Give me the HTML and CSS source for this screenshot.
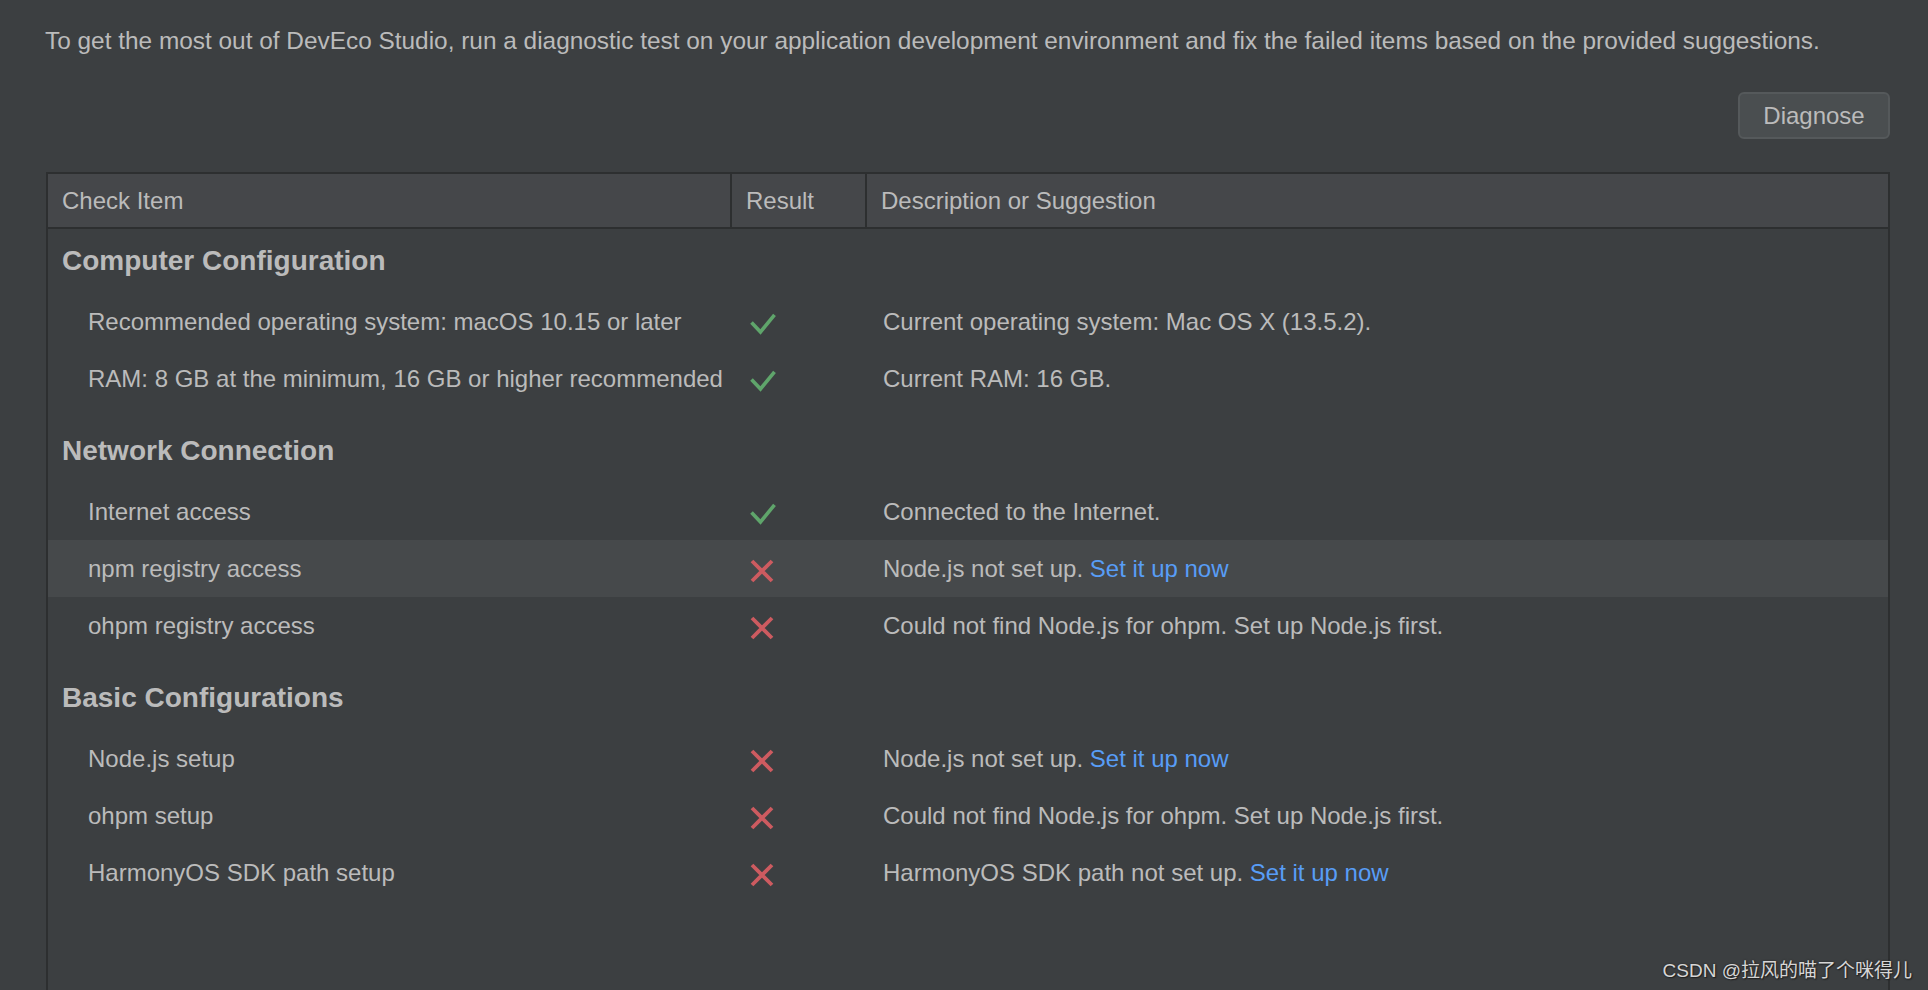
FILE: index.html
```html
<!DOCTYPE html>
<html lang="en">
<head>
<meta charset="utf-8">
<title>DevEco Studio Diagnose</title>
<link rel="stylesheet" href="styles.css">
</head>
<body>
<div class="page">
  <p class="intro">To get the most out of DevEco Studio, run a diagnostic test on your application development environment and fix the failed items based on the provided suggestions.</p>
  <div class="actions"><button class="btn">Diagnose</button></div>
  <div class="table">
    <div class="thead">
      <div class="th">Check Item</div>
      <div class="th">Result</div>
      <div class="th">Description or Suggestion</div>
    </div>
    <div class="tbody">
      <div class="section first">Computer Configuration</div>
      <div class="row">
        <div class="item">Recommended operating system: macOS 10.15 or later</div>
        <div class="result"><svg class="icon ok" viewBox="0 0 26 22" width="26" height="22"><polyline points="1.5,9.5 10.5,19 24.5,1.8"/></svg></div>
        <div class="desc">Current operating system: Mac OS X (13.5.2).</div>
      </div>
      <div class="row">
        <div class="item">RAM: 8 GB at the minimum, 16 GB or higher recommended</div>
        <div class="result"><svg class="icon ok" viewBox="0 0 26 22" width="26" height="22"><polyline points="1.5,9.5 10.5,19 24.5,1.8"/></svg></div>
        <div class="desc">Current RAM: 16 GB.</div>
      </div>

      <div class="section">Network Connection</div>
      <div class="row">
        <div class="item">Internet access</div>
        <div class="result"><svg class="icon ok" viewBox="0 0 26 22" width="26" height="22"><polyline points="1.5,9.5 10.5,19 24.5,1.8"/></svg></div>
        <div class="desc">Connected to the Internet.</div>
      </div>
      <div class="row selected">
        <div class="item">npm registry access</div>
        <div class="result"><svg class="icon fail" viewBox="0 0 24 24" width="24" height="24"><path d="M2 2 L22 22 M22 2 L2 22"/></svg></div>
        <div class="desc">Node.js not set up. <a class="link" href="#">Set it up now</a></div>
      </div>
      <div class="row">
        <div class="item">ohpm registry access</div>
        <div class="result"><svg class="icon fail" viewBox="0 0 24 24" width="24" height="24"><path d="M2 2 L22 22 M22 2 L2 22"/></svg></div>
        <div class="desc">Could not find Node.js for ohpm. Set up Node.js first.</div>
      </div>

      <div class="section">Basic Configurations</div>
      <div class="row">
        <div class="item">Node.js setup</div>
        <div class="result"><svg class="icon fail" viewBox="0 0 24 24" width="24" height="24"><path d="M2 2 L22 22 M22 2 L2 22"/></svg></div>
        <div class="desc">Node.js not set up. <a class="link" href="#">Set it up now</a></div>
      </div>
      <div class="row">
        <div class="item">ohpm setup</div>
        <div class="result"><svg class="icon fail" viewBox="0 0 24 24" width="24" height="24"><path d="M2 2 L22 22 M22 2 L2 22"/></svg></div>
        <div class="desc">Could not find Node.js for ohpm. Set up Node.js first.</div>
      </div>
      <div class="row">
        <div class="item">HarmonyOS SDK path setup</div>
        <div class="result"><svg class="icon fail" viewBox="0 0 24 24" width="24" height="24"><path d="M2 2 L22 22 M22 2 L2 22"/></svg></div>
        <div class="desc">HarmonyOS SDK path not set up. <a class="link" href="#">Set it up now</a></div>
      </div>
    </div>
  </div>
  <div class="watermark">CSDN @拉风的喵了个咪得儿</div>
</div>
</body>
</html>
```
FILE: styles.css
```css
html, body {
  margin: 0;
  padding: 0;
  background: #3c3f41;
}

body {
  font-family: "Liberation Sans", Arial, "Noto Sans CJK SC", sans-serif;
  font-size: 24px;
  color: #bbbbbb;
}

.page {
  position: relative;
  height: 990px;
  box-sizing: border-box;
  padding: 26px 38px 0 46px;
  display: flex;
  flex-direction: column;
  overflow: hidden;
}

.intro {
  margin: 0 0 0 -1px;
  line-height: 30px;
  font-size: 24.4px;
  white-space: nowrap;
}

.actions {
  display: flex;
  justify-content: flex-end;
  margin-top: 36px;
}

.btn {
  height: 47px;
  width: 152px;
  box-sizing: border-box;
  border: 2px solid #55595b;
  border-radius: 6px;
  background: #4a4e50;
  color: #bbbbbb;
  font-family: inherit;
  font-size: 24px;
  padding: 0;
}

.table {
  flex: 1;
  margin-top: 33px;
  border: 2px solid #2d2f30;
  border-bottom: none;
  display: flex;
  flex-direction: column;
}

.thead {
  display: grid;
  grid-template-columns: 684px 135px 1fr;
  height: 53px;
  background: #45474a;
  border-bottom: 2px solid #2d2f30;
}

.th {
  display: flex;
  align-items: center;
  padding-left: 14px;
  border-right: 2px solid #2d2f30;
}

.th:last-child {
  border-right: none;
}

.section {
  height: 64px;
  margin-top: 12px;
  padding-left: 14px;
  display: flex;
  align-items: center;
  font-weight: bold;
  font-size: 28px;
}

.section.first {
  margin-top: 0;
}

.row {
  display: grid;
  grid-template-columns: 684px 135px 1fr;
  height: 57px;
  align-items: center;
}

.row.selected {
  background: #46494b;
}

.item {
  padding-left: 40px;
  white-space: nowrap;
}

.result {
  padding-left: 18px;
  display: flex;
  align-items: center;
  padding-top: 5px;
}

.desc {
  padding-left: 16px;
  white-space: nowrap;
}

.link {
  color: #589df6;
  text-decoration: none;
}

.icon {
  display: block;
  fill: none;
}

.icon.ok polyline {
  stroke: #5fa56b;
  stroke-width: 3.6;
  stroke-linecap: butt;
  stroke-linejoin: miter;
}

.icon.fail path {
  stroke: #cd5b60;
  stroke-width: 3.8;
  stroke-linecap: butt;
}

.watermark {
  position: absolute;
  right: 16px;
  bottom: 8px;
  font-size: 19px;
  color: #d6d6d6;
  text-shadow: 0 0 2px #222, 1px 1px 1px #222;
  font-family: "Liberation Sans", "Noto Sans CJK SC", sans-serif;
}
```
